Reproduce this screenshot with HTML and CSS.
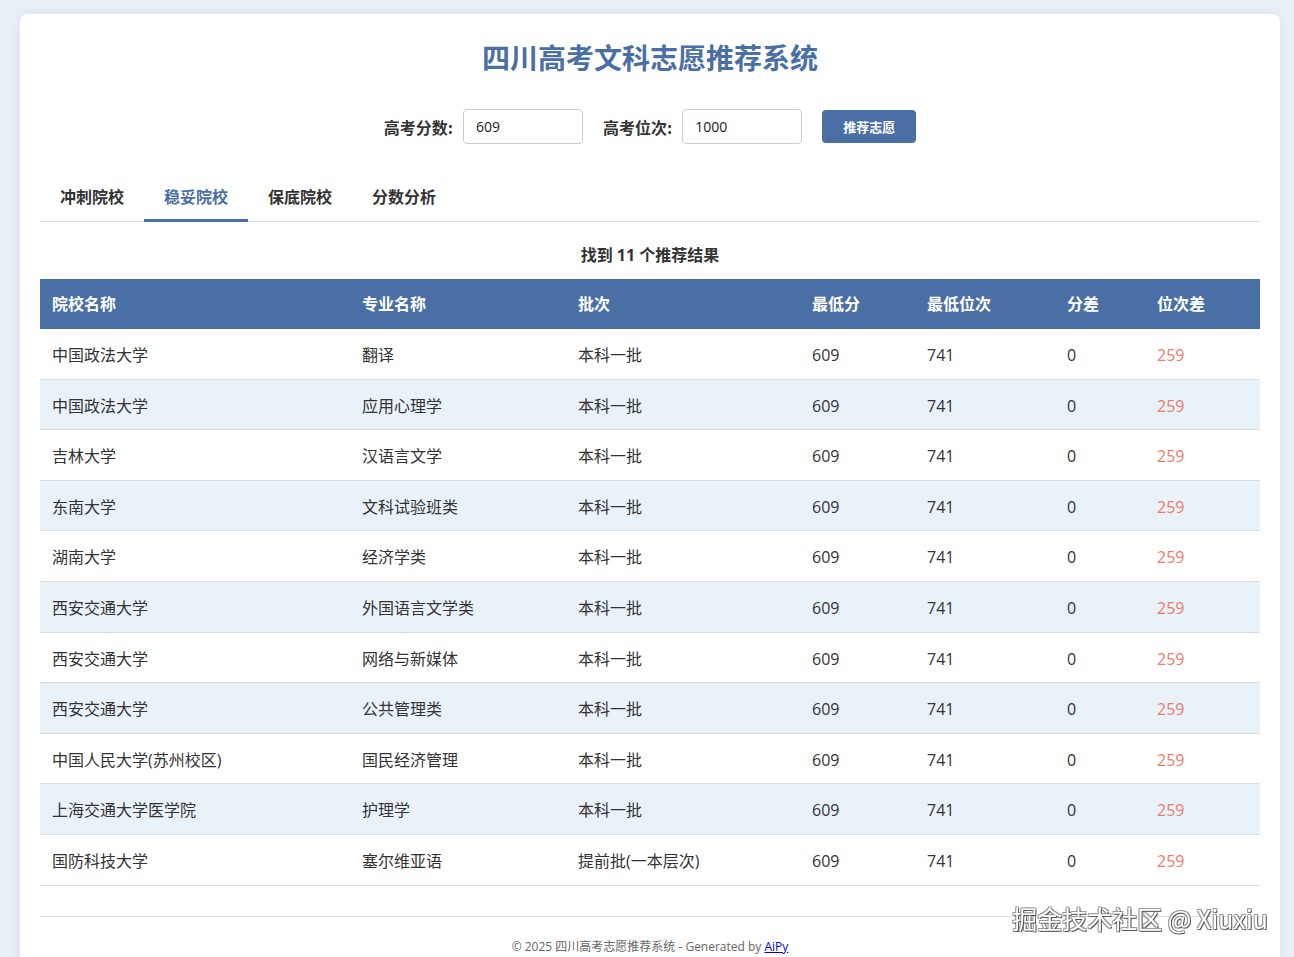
FILE: index.html
```html
<!DOCTYPE html>
<html lang="zh-CN">
<head>
<meta charset="utf-8">
<title>四川高考文科志愿推荐系统</title>
<link rel="stylesheet" href="styles.css">
</head>
<body>
<div class="container">
  <h1 class="title">四川高考文科志愿推荐系统</h1>
  <div class="form-row">
    <label class="form-label">高考分数:</label>
    <input class="form-input" type="text" value="609">
    <label class="form-label gap">高考位次:</label>
    <input class="form-input" type="text" value="1000">
    <button class="btn">推荐志愿</button>
  </div>
  <div class="tabs">
    <div class="tab">冲刺院校</div>
    <div class="tab active">稳妥院校</div>
    <div class="tab">保底院校</div>
    <div class="tab">分数分析</div>
  </div>
  <p class="count">找到 11 个推荐结果</p>
  <table class="results">
    <colgroup>
      <col class="c1"><col class="c2"><col class="c3"><col class="c4"><col class="c5"><col class="c6"><col class="c7">
    </colgroup>
    <thead>
      <tr><th>院校名称</th><th>专业名称</th><th>批次</th><th>最低分</th><th>最低位次</th><th>分差</th><th>位次差</th></tr>
    </thead>
    <tbody>
      <tr><td>中国政法大学</td><td>翻译</td><td>本科一批</td><td>609</td><td>741</td><td>0</td><td class="diff">259</td></tr>
      <tr><td>中国政法大学</td><td>应用心理学</td><td>本科一批</td><td>609</td><td>741</td><td>0</td><td class="diff">259</td></tr>
      <tr><td>吉林大学</td><td>汉语言文学</td><td>本科一批</td><td>609</td><td>741</td><td>0</td><td class="diff">259</td></tr>
      <tr><td>东南大学</td><td>文科试验班类</td><td>本科一批</td><td>609</td><td>741</td><td>0</td><td class="diff">259</td></tr>
      <tr><td>湖南大学</td><td>经济学类</td><td>本科一批</td><td>609</td><td>741</td><td>0</td><td class="diff">259</td></tr>
      <tr><td>西安交通大学</td><td>外国语言文学类</td><td>本科一批</td><td>609</td><td>741</td><td>0</td><td class="diff">259</td></tr>
      <tr><td>西安交通大学</td><td>网络与新媒体</td><td>本科一批</td><td>609</td><td>741</td><td>0</td><td class="diff">259</td></tr>
      <tr><td>西安交通大学</td><td>公共管理类</td><td>本科一批</td><td>609</td><td>741</td><td>0</td><td class="diff">259</td></tr>
      <tr><td>中国人民大学(苏州校区)</td><td>国民经济管理</td><td>本科一批</td><td>609</td><td>741</td><td>0</td><td class="diff">259</td></tr>
      <tr><td>上海交通大学医学院</td><td>护理学</td><td>本科一批</td><td>609</td><td>741</td><td>0</td><td class="diff">259</td></tr>
      <tr><td>国防科技大学</td><td>塞尔维亚语</td><td>提前批(一本层次)</td><td>609</td><td>741</td><td>0</td><td class="diff">259</td></tr>
    </tbody>
  </table>
  <footer class="footer">© 2025 四川高考志愿推荐系统 - Generated by <a href="#">AiPy</a></footer>
</div>
<div class="watermark">掘金技术社区 @ Xiuxiu</div>
</body>
</html>
```

FILE: styles.css
```css
* { box-sizing: border-box; }
html, body { height: 100%; }
body {
  margin: 0;
  padding: 14px 0 0 20px;
  background: #e9eff6;
  font-family: "Open Sans", "Noto Sans CJK SC", sans-serif;
  color: #333;
  overflow: hidden;
}
.container {
  width: 1260px;
  background: #fff;
  border-radius: 8px;
  box-shadow: 0 0 12px rgba(0, 0, 0, 0.06);
  padding: 20px 20px 40px;
}
.title {
  margin: 6px 0 0;
  text-align: center;
  color: #4a6fa5;
  font-size: 28px;
  line-height: 34px;
  font-weight: 700;
  font-family: "Noto Sans CJK SC", sans-serif;
}
.form-row {
  display: flex;
  justify-content: center;
  align-items: center;
  margin-top: 35px;
  height: 35px;
}
.form-label {
  font-size: 16px;
  font-weight: 700;
  margin-right: 10px;
  font-family: "Noto Sans CJK SC", sans-serif;
  line-height: 24px;
}
.form-label.gap { margin-left: 20px; }
.form-input {
  width: 120px;
  height: 35px;
  border: 1px solid #ccc;
  border-radius: 4px;
  padding: 0 12px;
  font-size: 14px;
  font-family: "Open Sans", sans-serif;
  color: #222;
}
.btn {
  margin-left: 20px;
  width: 94px;
  height: 33px;
  border: none;
  border-radius: 4px;
  background: #4a6fa5;
  color: #fff;
  font-size: 13px;
  font-weight: 700;
  font-family: "Noto Sans CJK SC", sans-serif;
}
.tabs {
  display: flex;
  margin-top: 30px;
  border-bottom: 1px solid #ddd;
}
.tab {
  padding: 10px 20px 11px;
  font-size: 16px;
  line-height: 24px;
  font-weight: 700;
  border-bottom: 3px solid transparent;
  margin-bottom: -1px;
  font-family: "Noto Sans CJK SC", sans-serif;
}
.tab.active {
  color: #4a6fa5;
  border-bottom-color: #4a6fa5;
}
.count {
  margin: 21px 0 12px;
  text-align: center;
  font-size: 16px;
  line-height: 24px;
  font-weight: 700;
}
.results {
  width: 1220px;
  border-collapse: collapse;
  table-layout: fixed;
}
.c1 { width: 310px; }
.c2 { width: 216px; }
.c3 { width: 234px; }
.c4 { width: 115px; }
.c5 { width: 140px; }
.c6 { width: 90px; }
.c7 { width: 115px; }
.results th {
  background: #4a6fa5;
  color: #fff;
  text-align: left;
  font-size: 16px;
  font-weight: 700;
  padding: 12px 12px 14px;
  line-height: 24px;
  font-family: "Noto Sans CJK SC", sans-serif;
}
.results td {
  padding: 14px 12px 11px;
  font-size: 16px;
  line-height: 24.6px;
  border-bottom: 1px solid #ddd;
  white-space: nowrap;
}
.results tbody tr:nth-child(even) td { background: #e9f1f9; }
.results td.diff { color: #ef7b6b; }
.footer {
  margin-top: 30px;
  border-top: 1px solid #ddd;
  padding-top: 21px;
  text-align: center;
  font-size: 12px;
  line-height: 18px;
  color: #666;
}
.footer a { color: #0000ee; }
.watermark {
  position: fixed;
  right: 26px;
  bottom: 24px;
  font-size: 25px;
  line-height: 30px;
  color: #fff;
  font-family: "Noto Sans CJK SC", sans-serif;
  font-weight: 400;
  text-shadow: 1px 1px 0 #555, -1px -1px 0 #999, 1px -1px 0 #999, -1px 1px 0 #999;
}
```
